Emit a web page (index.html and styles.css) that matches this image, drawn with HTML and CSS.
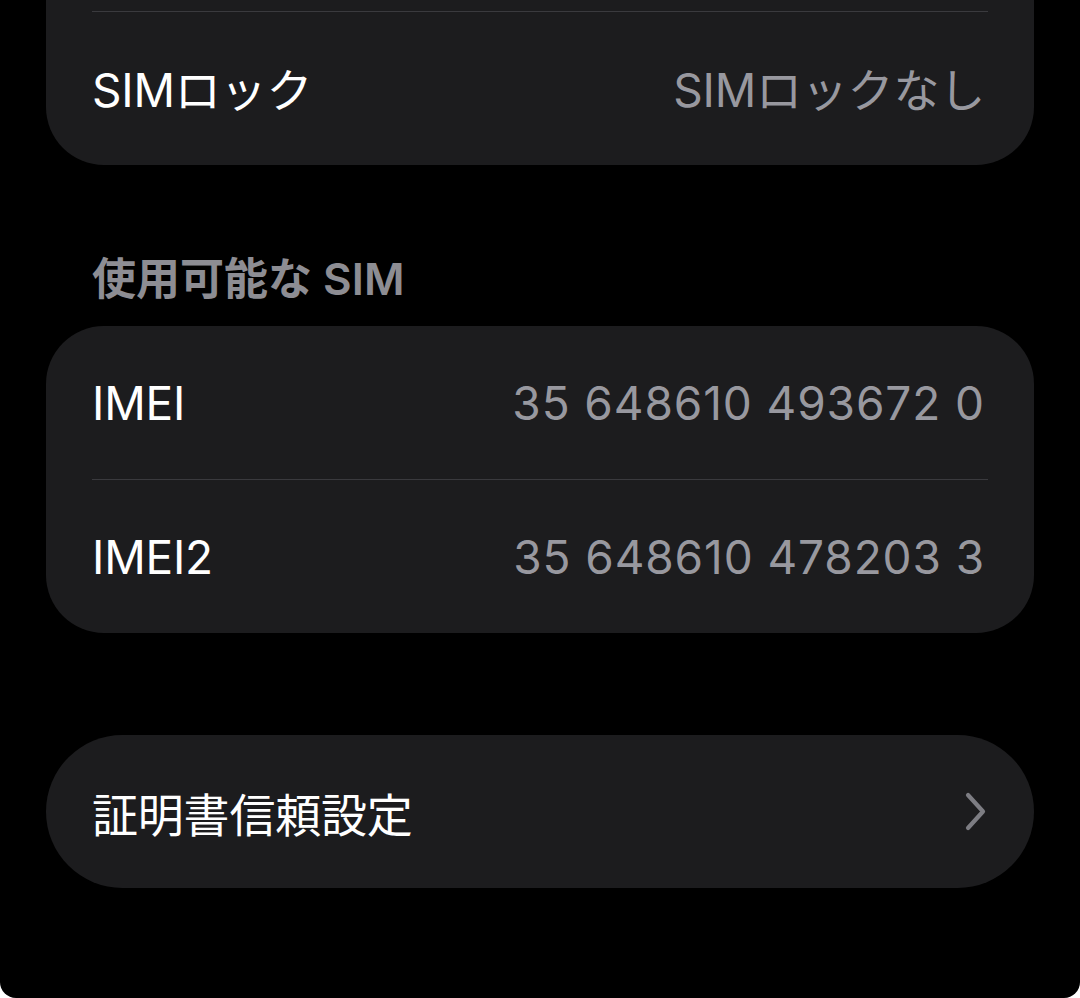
FILE: index.html
```html
<!DOCTYPE html>
<html lang="ja">
<head>
  <meta charset="UTF-8">
  <meta name="viewport" content="width=device-width, initial-scale=1.0">
  <title>情報</title>
  <link rel="stylesheet" href="styles.css">
</head>
<body>
  <div class="screen">
    <div class="group group-top">
      <div class="row"></div>
      <div class="row">
        <span class="row-label">SIMロック</span>
        <span class="row-value">SIMロックなし</span>
      </div>
    </div>

    <p class="group-title">使用可能な SIM</p>
    <div class="group">
      <div class="row">
        <span class="row-label">IMEI</span>
        <span class="row-value num">35 648610 493672 0</span>
      </div>
      <div class="row">
        <span class="row-label">IMEI2</span>
        <span class="row-value num">35 648610 478203 3</span>
      </div>
    </div>

    <div class="group group-pill">
      <div class="row">
        <span class="row-label">証明書信頼設定</span>
        <svg class="chevron" width="24" height="40" viewBox="0 0 24 40">
          <path d="M4 3 L19 19.5 L4 36" fill="none" stroke="#7d7d83" stroke-width="4.2" stroke-linecap="round" stroke-linejoin="round"/>
        </svg>
      </div>
    </div>
  </div>
</body>
</html>
```

FILE: styles.css
```css
html {
  background: #ffffff;
}

html, body {
  margin: 0;
  height: 100%;
}

body {
  font-family: Inter, "Noto Sans CJK JP", sans-serif;
  -webkit-font-smoothing: antialiased;
  overflow: hidden;
}

.screen {
  height: 998px;
  box-sizing: border-box;
  padding: 0 46px;
  background: #000000;
  border-radius: 0 0 16px 16px;
  overflow: hidden;
}

.group {
  background: #1c1c1e;
  border-radius: 58px;
  padding: 0 46px;
}

.group-top {
  margin-top: -142px;
  border-radius: 0 0 58px 58px;
}

.group-pill {
  margin-top: 102px;
  border-radius: 999px;
}

.row {
  height: 153px;
  display: flex;
  align-items: center;
  justify-content: space-between;
  font-size: 46px;
  letter-spacing: -0.2px;
}

.row + .row {
  height: 153px;
  border-top: 1.5px solid #3a3a3e;
}

.group-top .row + .row {
  height: 154px;
  padding-bottom: 4px;
  box-sizing: border-box;
}

.row-label {
  color: #ffffff;
}

.row-value {
  color: #98989f;
  margin-right: 3px;
}

.row-value.num {
  letter-spacing: 0.9px;
}

.group-title {
  margin: 88px 0 20px;
  padding-left: 46px;
  font-size: 44px;
  line-height: 53px;
  font-weight: 600;
  color: #8d8d93;
}

.chevron {
  margin-right: 0;
}
```
